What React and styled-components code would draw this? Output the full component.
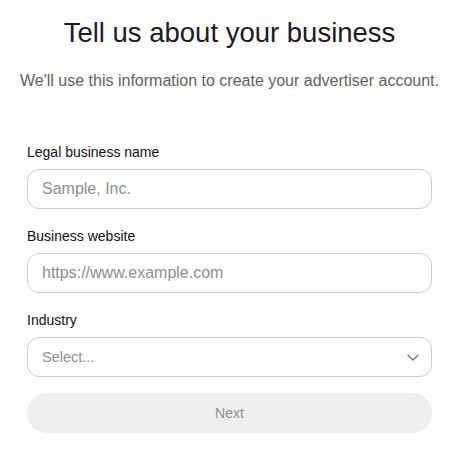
import React, { useState } from 'react';
import styled, { createGlobalStyle } from 'styled-components';

const GlobalStyle = createGlobalStyle`
  html, body {
    margin: 0;
    padding: 0;
    background: #ffffff;
  }
  body {
    font-family: "Liberation Sans", Arial, sans-serif;
    color: #111111;
  }
`;

const Page = styled.div`
  width: 459px;
  box-sizing: border-box;
  padding: 16px 27px 0 27px;
  display: flex;
  flex-direction: column;
`;

const Title = styled.h1`
  margin: 0;
  font-size: 27.5px;
  line-height: 34px;
  font-weight: 400;
  color: #211922;
  text-align: center;
`;

const Subtitle = styled.p`
  margin: 20px -12px 0 -12px;
  font-size: 16px;
  line-height: 22px;
  color: #5f5f5f;
  text-align: center;
`;

const Form = styled.form`
  margin-top: 51px;
  display: flex;
  flex-direction: column;
  gap: 18px;
`;

const Field = styled.div`
  display: flex;
  flex-direction: column;
  gap: 8px;
`;

const Label = styled.label`
  font-size: 14px;
  line-height: 18px;
  color: #111111;
`;

const Input = styled.input`
  box-sizing: border-box;
  width: 100%;
  height: 40px;
  margin: 0;
  padding: 0 14px;
  border: 1px solid #cdcdcd;
  border-radius: 12px;
  font-family: inherit;
  font-size: 16px;
  color: #111111;
  background: #ffffff;
  outline: none;

  &::placeholder {
    color: #8e8e8e;
  }
`;

const SelectBox = styled.button`
  box-sizing: border-box;
  width: 100%;
  height: 40px;
  padding: 0 14px;
  border: 1px solid #cdcdcd;
  border-radius: 12px;
  background: #ffffff;
  display: flex;
  align-items: center;
  justify-content: space-between;
  font-family: inherit;
  font-size: 14.5px;
  color: #8e8e8e;
  cursor: pointer;
`;

const Chevron = styled.svg`
  width: 12px;
  height: 12px;
  margin-right: -2px;
`;

const NextButton = styled.button`
  box-sizing: border-box;
  margin-top: -2px;
  width: 100%;
  height: 40px;
  border: none;
  border-radius: 20px;
  background: #efefef;
  color: #8e8e8e;
  font-family: inherit;
  font-size: 14px;
  cursor: not-allowed;
`;

export default function App() {
  const [name, setName] = useState('');
  const [website, setWebsite] = useState('');

  return (
    <>
      <GlobalStyle />
      <Page>
        <Title>Tell us about your business</Title>
        <Subtitle>
          We'll use this information to create your advertiser account.
        </Subtitle>
        <Form onSubmit={e => e.preventDefault()}>
          <Field>
            <Label htmlFor="legal-name">Legal business name</Label>
            <Input
              id="legal-name"
              type="text"
              value={name}
              placeholder="Sample, Inc."
              onChange={e => setName(e.target.value)}
            />
          </Field>
          <Field>
            <Label htmlFor="website">Business website</Label>
            <Input
              id="website"
              type="text"
              value={website}
              placeholder="https://www.example.com"
              onChange={e => setWebsite(e.target.value)}
            />
          </Field>
          <Field>
            <Label htmlFor="industry">Industry</Label>
            <SelectBox id="industry" type="button">
              <span>Select...</span>
              <Chevron viewBox="0 0 12 12" fill="none">
                <path
                  d="M1 4.2l5 4.8 5-4.8"
                  stroke="#767676"
                  strokeWidth="1.3"
                  strokeLinecap="round"
                  strokeLinejoin="round"
                />
              </Chevron>
            </SelectBox>
          </Field>
          <NextButton type="submit" disabled={!name || !website}>
            Next
          </NextButton>
        </Form>
      </Page>
    </>
  );
}
